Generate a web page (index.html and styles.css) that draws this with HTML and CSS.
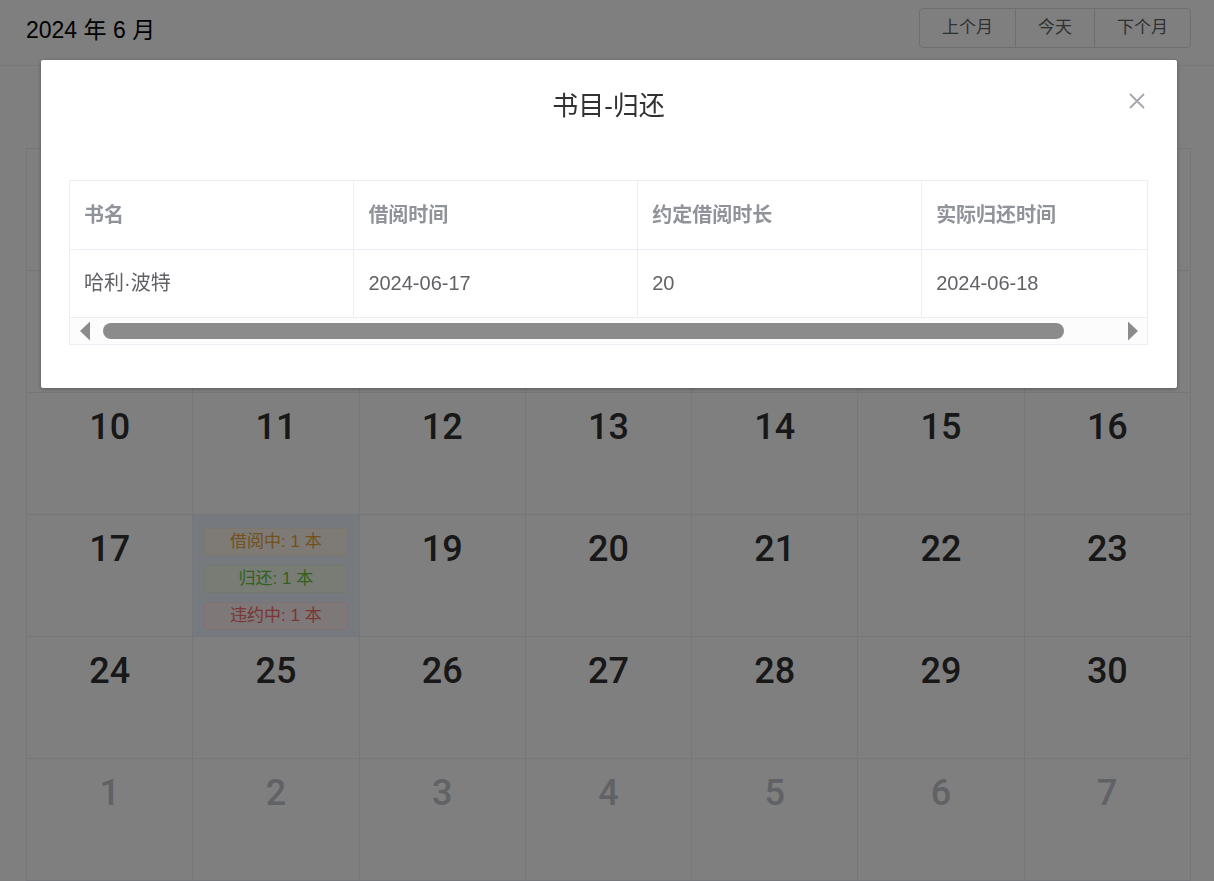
FILE: index.html
```html
<!DOCTYPE html>
<html lang="zh-CN">
<head>
<meta charset="utf-8">
<meta name="viewport" content="width=device-width, initial-scale=1">
<title>2024 年 6 月</title>
<link rel="stylesheet" href="styles.css">
</head>
<body>
<main class="calendar">
  <header class="calendar-header">
    <h1 class="calendar-title">2024 年 6 月</h1>
    <div class="button-group">
      <button type="button">上个月</button>
      <button type="button">今天</button>
      <button type="button">下个月</button>
    </div>
  </header>
  <table class="month">
    <thead>
      <tr><th></th><th></th><th></th><th></th><th></th><th></th><th></th></tr>
    </thead>
    <tbody>
      <tr><td></td><td></td><td></td><td></td><td></td><td></td><td></td></tr>
      <tr><td></td><td></td><td></td><td></td><td></td><td></td><td></td></tr>
      <tr><td>10</td><td>11</td><td>12</td><td>13</td><td>14</td><td>15</td><td>16</td></tr>
      <tr>
        <td>17</td>
        <td class="selected">
          <div class="tags">
            <span class="tag tag-warning">借阅中: 1 本</span>
            <span class="tag tag-success">归还: 1 本</span>
            <span class="tag tag-danger">违约中: 1 本</span>
          </div>
        </td>
        <td>19</td><td>20</td><td>21</td><td>22</td><td>23</td>
      </tr>
      <tr><td>24</td><td>25</td><td>26</td><td>27</td><td>28</td><td>29</td><td>30</td></tr>
      <tr><td class="other">1</td><td class="other">2</td><td class="other">3</td><td class="other">4</td><td class="other">5</td><td class="other">6</td><td class="other">7</td></tr>
    </tbody>
  </table>
</main>

<div class="overlay">
  <section class="dialog" role="dialog" aria-modal="true" aria-labelledby="dialog-title">
    <header class="dialog-header">
      <h2 class="dialog-title" id="dialog-title">书目-归还</h2>
      <button class="dialog-close" type="button" aria-label="关闭">
        <svg viewBox="0 0 16 16" width="16" height="16" aria-hidden="true"><path d="M1 1L15 15M15 1L1 15" fill="none" stroke="#a3a6ab" stroke-width="1.8"/></svg>
      </button>
    </header>
    <div class="grid">
      <div class="grid-view">
        <table class="books">
          <thead>
            <tr><th scope="col">书名</th><th scope="col">借阅时间</th><th scope="col">约定借阅时长</th><th scope="col">实际归还时间</th></tr>
          </thead>
          <tbody>
            <tr><td>哈利·波特</td><td>2024-06-17</td><td>20</td><td>2024-06-18</td></tr>
          </tbody>
        </table>
      </div>
      <div class="scrollbar">
        <button class="scroll-arrow" type="button" aria-label="向左滚动">
          <svg viewBox="0 0 10 20" width="10" height="20" aria-hidden="true"><path d="M10 0.5V19.5L0 10Z" fill="#8b8b8b"/></svg>
        </button>
        <div class="scroll-track"><div class="scroll-thumb"></div></div>
        <button class="scroll-arrow" type="button" aria-label="向右滚动">
          <svg viewBox="0 0 10 20" width="10" height="20" aria-hidden="true"><path d="M0 0.5V19.5L10 10Z" fill="#8b8b8b"/></svg>
        </button>
      </div>
    </div>
  </section>
</div>
</body>
</html>
```
FILE: styles.css
```css
* {
  box-sizing: border-box;
}

body {
  margin: 0;
  background: #fff;
  color: #000;
  font-family: "Liberation Sans", "Noto Sans CJK SC", sans-serif;
}

button {
  margin: 0;
  font-family: inherit;
  cursor: pointer;
}

/* Calendar */
.calendar-header {
  display: flex;
  justify-content: space-between;
  align-items: flex-start;
  height: 66px;
  padding: 8px 23px 0 26px;
  border-bottom: 1px solid #ebeef5;
}

.calendar-title {
  margin: 0;
  font-size: 23px;
  font-weight: 400;
  line-height: 44px;
}

.button-group {
  display: flex;
}

.button-group button {
  height: 40px;
  padding: 0 22px;
  border: 1px solid #dcdfe6;
  background: #fff;
  color: #606266;
  font-size: 17px;
  line-height: 38px;
}

.button-group button + button {
  margin-left: -1px;
}

.button-group button:first-child {
  border-radius: 4px 0 0 4px;
}

.button-group button:last-child {
  border-radius: 0 4px 4px 0;
}

.month {
  width: calc(100% - 49px);
  margin: 0 23px 0 26px;
  border-collapse: collapse;
  table-layout: fixed;
}

.month th {
  height: 82px;
  padding: 0;
}

.month td {
  height: 122px;
  padding: 12px 0 0;
  border: 1px solid #ebeef5;
  color: #303133;
  font-family: Roboto, sans-serif;
  font-size: 36px;
  font-weight: 500;
  line-height: 44px;
  text-align: center;
  vertical-align: top;
}

.month .other {
  color: #c0c4cc;
}

.month .selected {
  padding: 13px 11px 0;
  background: #ecf5ff;
}

.tags {
  display: grid;
  gap: 9px;
}

.tag {
  height: 28px;
  border: 1px solid;
  border-radius: 4px;
  font: 400 17px/26px "Liberation Sans", "Noto Sans CJK SC", sans-serif;
}

.tag-warning {
  border-color: #faecd8;
  background: #fdf6ec;
  color: #e6a23c;
}

.tag-success {
  border-color: #e1f3d8;
  background: #f0f9eb;
  color: #67c23a;
}

.tag-danger {
  border-color: #fde2e2;
  background: #fef0f0;
  color: #f56c6c;
}

/* Dialog */
.overlay {
  position: fixed;
  inset: 0;
  padding: 60px 37px 0 41px;
  background: rgba(0, 0, 0, 0.5);
}

.dialog {
  padding: 25px 29px 43px 28px;
  border-radius: 2px;
  background: #fff;
  box-shadow: 0 1px 4px rgba(0, 0, 0, 0.3);
}

.dialog-header {
  display: grid;
  grid-template-columns: 24px 1fr 24px;
  align-items: start;
  height: 95px;
}

.dialog-title {
  grid-column: 2;
  margin: 0;
  color: #303133;
  font-size: 26px;
  font-weight: 400;
  line-height: 42px;
  text-align: center;
}

.dialog-close {
  display: flex;
  justify-content: flex-end;
  padding: 8px 3px;
  border: 0;
  background: none;
}

.grid {
  border: 1px solid #ebeef5;
}

.grid-view {
  overflow: hidden;
}

.books {
  width: 1136px;
  border-collapse: collapse;
  table-layout: fixed;
}

.books th,
.books td {
  height: 68px;
  padding: 0 14px;
  border-right: 1px solid #ebeef5;
  border-bottom: 1px solid #ebeef5;
  font-size: 20px;
  line-height: 28px;
  text-align: left;
}

.books th {
  color: #909399;
  font-weight: 700;
}

.books td {
  color: #606266;
}

.scrollbar {
  display: flex;
  align-items: center;
  gap: 13px;
  height: 26px;
  padding: 0 9px 0 10px;
  background: #fcfcfc;
}

.scroll-arrow {
  display: flex;
  padding: 0;
  border: 0;
  background: none;
}

.scroll-track {
  flex: 1;
}

.scroll-thumb {
  width: 95%;
  height: 16px;
  border-radius: 8px;
  background: #8b8b8b;
}
```
